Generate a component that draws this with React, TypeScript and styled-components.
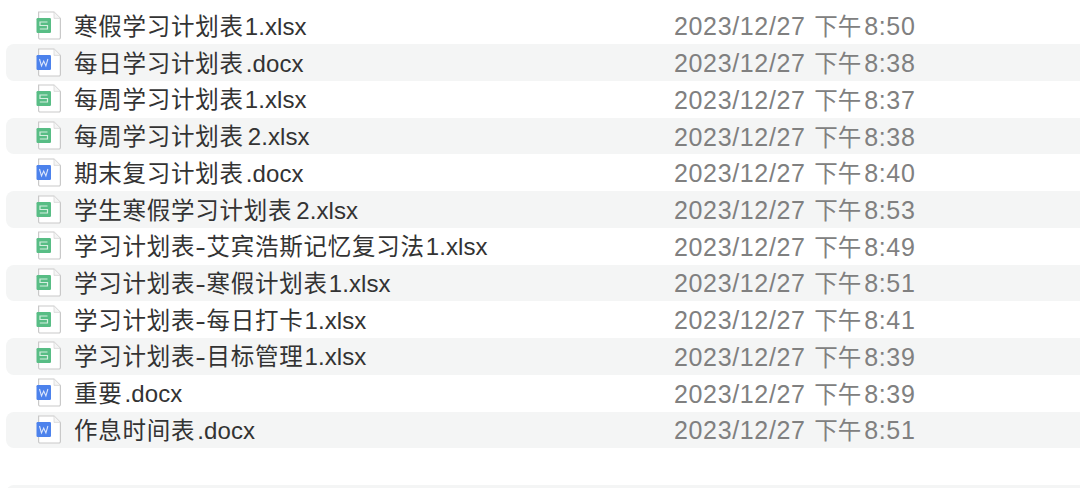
import React from "react";
import styled, { createGlobalStyle } from "styled-components";

const GlobalStyle = createGlobalStyle`
  html, body {
    margin: 0;
    padding: 0;
    background: #ffffff;
    overflow: hidden;
  }
`;

const Page = styled.div`
  width: 1080px;
  height: 488px;
  overflow: hidden;
  padding: 7.6px 0 0 6px;
  box-sizing: border-box;
  font-family: "Liberation Sans", "Noto Sans CJK SC", sans-serif;
`;

const Row = styled.div<{ $striped: boolean }>`
  display: flex;
  align-items: center;
  height: 36.73px;
  border-radius: 8px 0 0 8px;
  background: ${(p) => (p.$striped ? "#f4f5f5" : "transparent")};
`;

const IconSlot = styled.div`
  width: 68px;
  padding-left: 30px;
  box-sizing: border-box;
  display: flex;
  align-items: center;
  flex-shrink: 0;
`;

const Name = styled.div`
  width: 600px;
  flex-shrink: 0;
  font-size: 23.5px;
  letter-spacing: 0.75px;
  line-height: 34px;
  margin-top: 2px;
  color: #333333;
  white-space: nowrap;
`;

const Dash = styled.span`
  display: inline-block;
  width: 11.25px;
  letter-spacing: 0;
  text-align: center;
  transform: scaleX(1.35);
`;

const Latin = styled.span<{ $gap: number }>`
  font-size: 24px;
  letter-spacing: 0.1px;
  margin-left: ${(p) => p.$gap}px;
`;

const Modified = styled.div`
  font-size: 25px;
  letter-spacing: 0.65px;
  line-height: 34px;
  margin-top: 2px;
  color: #808080;
  white-space: nowrap;
`;

const Meridiem = styled.span`
  font-size: 23.5px;
  letter-spacing: 0;
  margin: 0 3px 0 1px;
`;

type Kind = "xlsx" | "docx";

const FileIcon = ({ kind }: { kind: Kind }) => {
  const fill = kind === "xlsx" ? "#58bd85" : "#4c82ec";
  return (
    <svg width="26" height="30" viewBox="0 0 26 30">
      <path
        d="M2.6 1h15.4l6.4 6.4v19.1a1.5 1.5 0 0 1-1.5 1.5H4.1a1.5 1.5 0 0 1-1.5-1.5z"
        fill="#fff"
        stroke="#c9c9c9"
        strokeWidth="1.2"
      />
      <path d="M18 1v6.4h6.4" fill="#f5f5f5" stroke="#d8d8d8" strokeWidth="0.8" />
      <rect x="0.5" y="7" width="14.5" height="15" rx="1.2" fill={fill} />
      {kind === "xlsx" ? (
        <path
          d="M11.5 11H4v3.5h7.5V18H3.8"
          fill="none"
          stroke="#ffffff"
          strokeOpacity="0.75"
          strokeWidth="1.2"
        />
      ) : (
        <path
          d="M3.5 11l2 7 2.2-5 2.2 5 2-7"
          fill="none"
          stroke="#ffffff"
          strokeOpacity="0.8"
          strokeWidth="1.1"
        />
      )}
    </svg>
  );
};

const files: { stem: string; ext: string; kind: Kind; time: string }[] = [
  { stem: "寒假学习计划表", ext: "1.xlsx", kind: "xlsx", time: "8:50" },
  { stem: "每日学习计划表", ext: ".docx", kind: "docx", time: "8:38" },
  { stem: "每周学习计划表", ext: "1.xlsx", kind: "xlsx", time: "8:37" },
  { stem: "每周学习计划表", ext: "2.xlsx", kind: "xlsx", time: "8:38" },
  { stem: "期末复习计划表", ext: ".docx", kind: "docx", time: "8:40" },
  { stem: "学生寒假学习计划表", ext: "2.xlsx", kind: "xlsx", time: "8:53" },
  { stem: "学习计划表-艾宾浩斯记忆复习法", ext: "1.xlsx", kind: "xlsx", time: "8:49" },
  { stem: "学习计划表-寒假计划表", ext: "1.xlsx", kind: "xlsx", time: "8:51" },
  { stem: "学习计划表-每日打卡", ext: "1.xlsx", kind: "xlsx", time: "8:41" },
  { stem: "学习计划表-目标管理", ext: "1.xlsx", kind: "xlsx", time: "8:39" },
  { stem: "重要", ext: ".docx", kind: "docx", time: "8:39" },
  { stem: "作息时间表", ext: ".docx", kind: "docx", time: "8:51" },
];

// the space left of the extension depends on its first glyph
const extGap = (ext: string) => (ext[0] === "2" ? 4 : ext[0] === "." ? 2 : 1);

export default function App() {
  return (
    <Page>
      <GlobalStyle />
      {files.map((f, i) => {
        const [head, tail] = f.stem.split("-");
        return (
          <Row key={i} $striped={i % 2 === 1}>
            <IconSlot>
              <FileIcon kind={f.kind} />
            </IconSlot>
            <Name>
              {head}
              {tail && <Dash>-</Dash>}
              {tail}
              <Latin $gap={extGap(f.ext)}>{f.ext}</Latin>
            </Name>
            <Modified>
              2023/12/27 <Meridiem>下午</Meridiem>
              {f.time}
            </Modified>
          </Row>
        );
      })}
      <Row $striped={false} />
      <Row $striped={true} />
    </Page>
  );
}
